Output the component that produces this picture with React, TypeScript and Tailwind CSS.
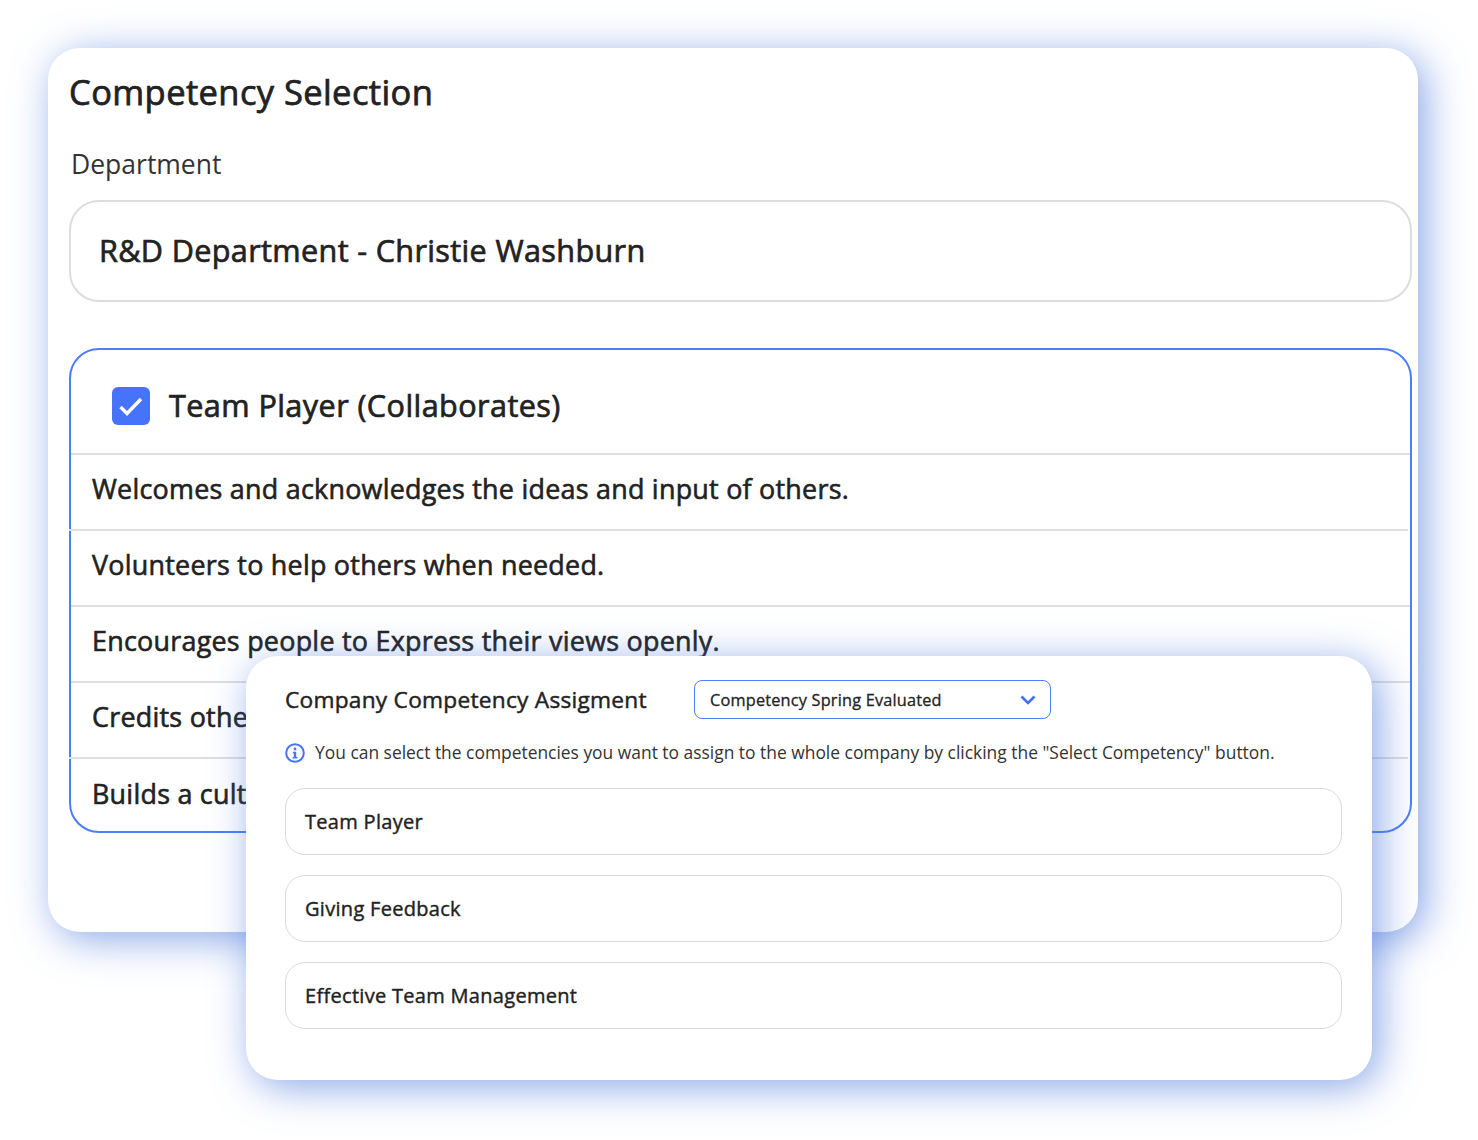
import React from "react";

const rows = [
  "Welcomes and acknowledges the ideas and input of others.",
  "Volunteers to help others when needed.",
  "Encourages people to Express their views openly.",
  "Credits othe",
  "Builds a cult",
];

const items = ["Team Player", "Giving Feedback", "Effective Team Management"];

export default function App() {
  return (
    <div className="relative h-[1140px] w-[1478px] overflow-hidden bg-white pt-12 pl-12 font-['Open_Sans',sans-serif] text-[#222222]">
      <div className="h-[884px] w-[1370px] rounded-[32px] bg-white pt-[17px] pl-[21px] pr-[6px] shadow-[7px_7px_40px_rgba(75,120,220,0.65)]">
        <h1 className="text-[34.500px] leading-[54px] tracking-[0.4px] [-webkit-text-stroke:0.75px_#222222]">Competency Selection</h1>
        <div className="mt-[27px] pl-[2px] text-[26.500px] leading-[36px] text-[#333333]">Department</div>
        <div className="mt-[18px] flex h-[102px] items-center rounded-[30px] border-2 border-[#dddddd] pl-[28px] text-[30.600px] tracking-[0.35px] [-webkit-text-stroke:0.7px_#222222]">
          R&amp;D Department - Christie Washburn
        </div>
        <div className="mt-[46px] h-[485px] rounded-[30px] border-2 border-[#4c7dff]">
          <div className="flex h-[105px] items-center gap-[19px] border-b-2 border-[#dedede] pt-[9px] pl-[41px]">
            <span className="flex h-[38px] w-[38px] items-center justify-center rounded-[6px] bg-[#4673fa]">
              <svg width="26" height="26" viewBox="0 0 26 26" fill="none" stroke="white" strokeWidth="3.400">
                <path d="M2.500 14l6.500 6.500L23 6" />
              </svg>
            </span>
            <span className="text-[30.600px] tracking-[0.42px] [-webkit-text-stroke:0.7px_#222222]">Team Player (Collaborates)</span>
          </div>
          {rows.map((r, i) => (
            <div
              key={r}
              className={`flex h-[76px] items-center pb-[6px] text-[26.900px] tracking-[0.25px] [-webkit-text-stroke:0.6px_#222222] ${i === 0 || i === 3 ? "-ml-[2px] mr-[2px] pl-[23px]" : "pl-[21px]"} ${i < rows.length - 1 ? "border-b-2 border-[#dedede]" : ""}`}
            >
              {r}
            </div>
          ))}
        </div>
      </div>

      <div className="absolute top-[656px] left-[246px] h-[424px] w-[1126px] rounded-[32px] bg-white pt-[24px] pr-[30px] pl-[39px] shadow-[7px_7px_40px_rgba(75,120,220,0.65)]">
        <div className="flex items-center">
          <h2 className="w-[409px] text-[22.700px] leading-[39px] tracking-[0.25px] [-webkit-text-stroke:0.45px_#222222]">Company Competency Assigment</h2>
          <div className="flex h-[39px] w-[357px] items-center justify-between rounded-[8px] border border-[#4c7dff] pt-[1px] pr-[14px] pl-[15px] text-[16.300px] tracking-[0.2px] [-webkit-text-stroke:0.3px_#222222]">
            Competency Spring Evaluated
            <svg width="16" height="10" viewBox="0 0 16 10" fill="none" stroke="#3f6ff5" strokeWidth="2.500">
              <path d="M1.500 1.500L8 8l6.500-6.500" />
            </svg>
          </div>
        </div>
        <div className="mt-[20px] flex h-[27px] items-center gap-[10px] text-[17.420px] text-[#333333]">
          <svg width="20" height="20" viewBox="0 0 20 20" fill="none">
            <circle cx="10" cy="10" r="8.800" stroke="#4673fa" strokeWidth="2" />
            <circle cx="10" cy="6" r="1.400" fill="#4673fa" />
            <path d="M7.800 8.800h3.400v5.200h1.200v1.400H7.600V14h1.200v-3.800h-1z" fill="#4673fa" />
          </svg>
          <span>You can select the competencies you want to assign to the whole company by clicking the "Select Competency" button.</span>
        </div>
        <div className="mt-[22px] flex flex-col gap-[20px]">
          {items.map((t) => (
            <div key={t} className="flex h-[67px] items-center rounded-[20px] border border-[#dadada] pl-[19px] text-[20px] tracking-[0.3px] [-webkit-text-stroke:0.4px_#222222]">
              {t}
            </div>
          ))}
        </div>
      </div>
    </div>
  );
}
